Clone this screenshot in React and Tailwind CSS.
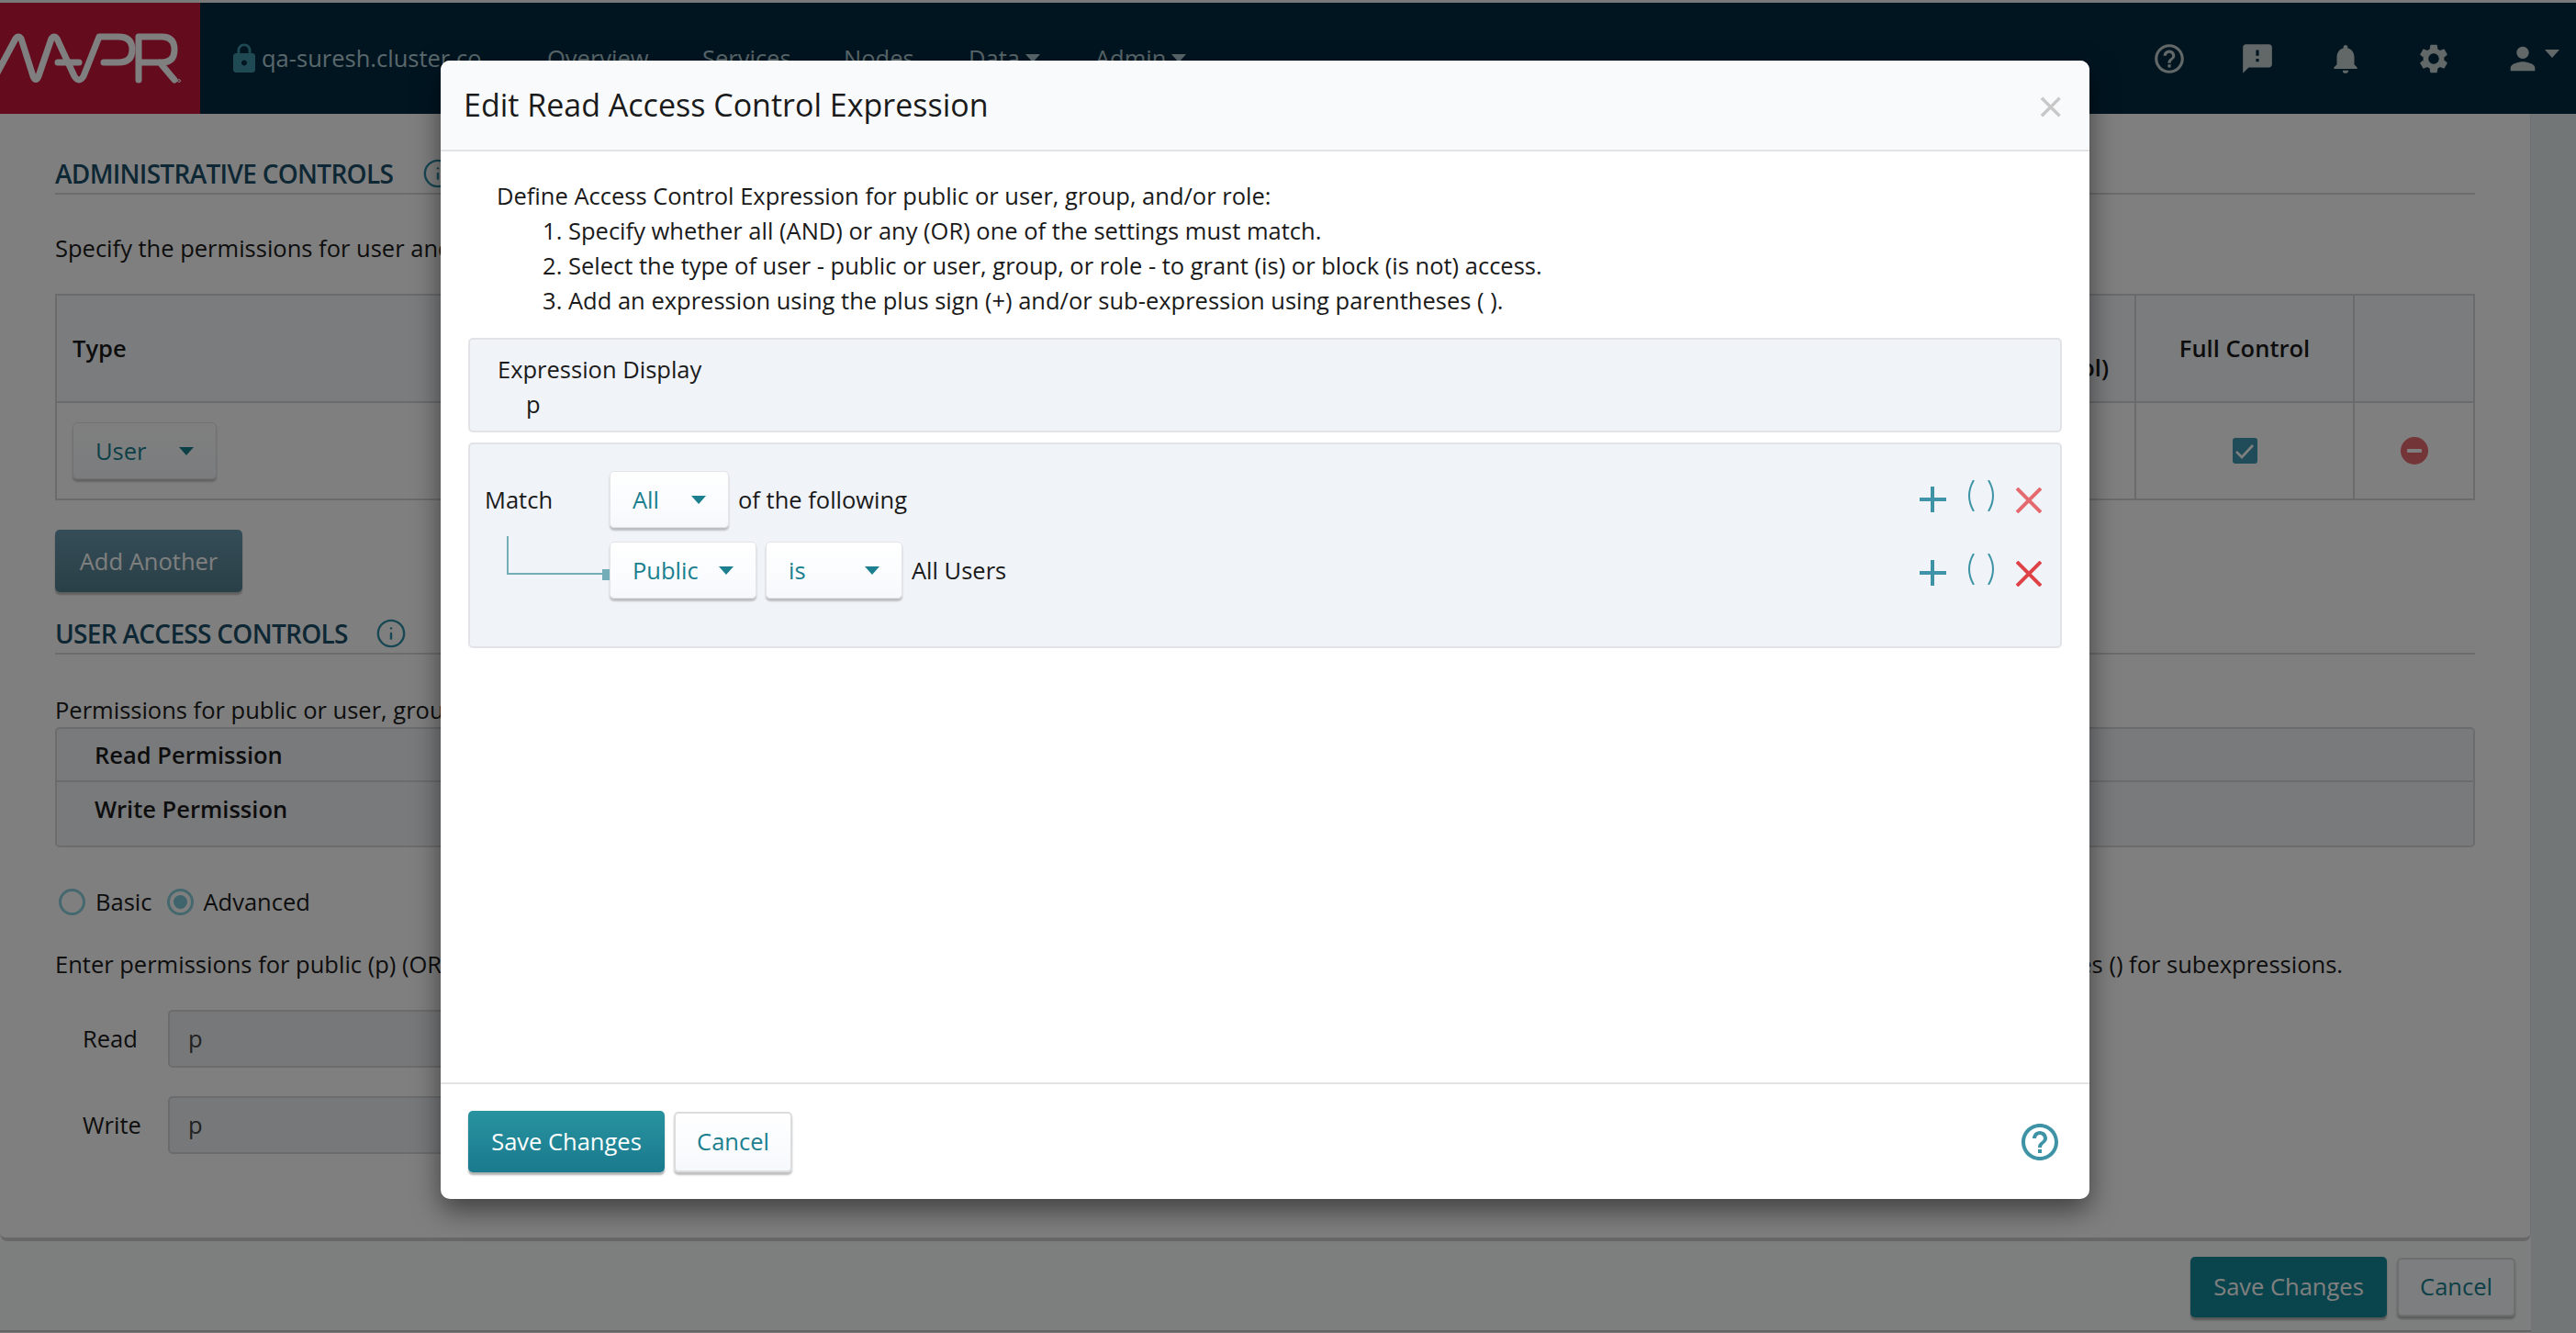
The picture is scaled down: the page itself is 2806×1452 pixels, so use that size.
import { Info } from 'lucide-react';
import { MdHelpOutline, MdFeedback, MdNotifications, MdSettings, MdPerson, MdLock } from 'react-icons/md';

const Caret = ({ className = '' }) => (
  <svg viewBox="0 0 16 9" className={`w-[16px] h-[9px] shrink-0 ${className}`}>
    <polygon points="0,0 16,0 8,9" fill="currentColor" />
  </svg>
);

const Logo = () => (
  <svg viewBox="0 0 218 121" className="w-[218px] h-[121px] block" fill="none" stroke="#ffffff" strokeWidth="7" strokeLinejoin="round" strokeLinecap="round">
    <path d="M-6 82 L17 39 Q20 35 23 39 L36 80 Q39 87 42 80 L56 39 Q59 35 62 39 L81 80 Q86 88 91 80 L108 37 H129 Q144 37 144 51 Q144 65 129 65 H113" />
    <path d="M63 65 H86" />
    <path d="M151 84 V37 H176 Q190 37 190 51 Q190 65 176 65 H151 M174 65 L190 84" />
    <circle cx="195" cy="85" r="1.5" strokeWidth="1" />
  </svg>
);

const Select = ({ label, width }) => (
  <div className={`${width} h-[62px] flex items-center justify-between pl-[24px] pr-[24px] bg-linear-to-b from-white to-[#f6f9fc] border border-[#e2e4e8] rounded-[5px] shadow-[0_3px_2px_rgba(0,0,0,0.22)] text-[#1b7f8f] shrink-0`}>
    <span>{label}</span>
    <Caret />
  </div>
);

const RowActions = ({ xColor, offset }) => (
  <div className={`ml-auto flex items-start gap-[21px] pr-[20px] ${offset}`}>
    <svg viewBox="0 0 29 28" className="w-[29px] h-[28px] mt-[7px]" fill="#3f93a6">
      <rect x="0" y="12" width="29" height="4" />
      <rect x="12" y="0" width="4" height="28" />
    </svg>
    <svg viewBox="0 0 34 34" className="w-[34px] h-[34px]" fill="none" stroke="#3f93a6" strokeWidth="2">
      <path d="M9 0 Q-1 17 9 34" />
      <path d="M25 0 Q35 17 25 34" />
    </svg>
    <svg viewBox="0 0 28 28" className="w-[28px] h-[28px] mt-[8px]" fill="none" stroke={xColor} strokeWidth="4">
      <path d="M1 1 L27 27 M27 1 L1 27" />
    </svg>
  </div>
);

const SectionTitle = ({ title, margin, iconMargin }) => (
  <div className={`${margin} h-[48px] pt-[4px] border-b-2 border-[#d8d8d8] flex items-center text-[28px] font-semibold tracking-[-0.7px] text-[#1c4f68]`}>
    <span>{title}</span>
    <Info className={`${iconMargin} text-[#2f8ea6]`} size={34} strokeWidth={1.7} />
  </div>
);

const App = () => {
  return (
    <div className="relative w-[2806px] h-[1452px] overflow-hidden bg-white font-['Open_Sans','Noto_Sans',sans-serif] text-[25.5px] text-[#1a1a1a]">
      {/* Page under the dialog */}
      <div className="h-[3px] bg-[#f0f0f0]" />
      <div className="h-[121px] flex items-center bg-[#022a42] text-[#b4d0d8]">
        <div className="w-[218px] h-full bg-[#c8183c] shrink-0 overflow-hidden"><Logo /></div>
        <MdLock className="ml-[30px] text-[#3e94a8]" size={36} />
        <span className="ml-[1px] w-[311px]">qa-suresh.cluster.co</span>
        <span className="w-[169px]">Overview</span>
        <span className="w-[154px]">Services</span>
        <span className="w-[136px]">Nodes</span>
        <span className="w-[138px] flex items-center gap-[6px]">Data<Caret /></span>
        <span className="flex items-center gap-[6px]">Admin<Caret /></span>
        <div className="ml-auto flex items-center gap-[58px] pr-[18px] text-[#c4d0d0]">
          <MdHelpOutline size={38} />
          <MdFeedback size={38} />
          <MdNotifications size={38} />
          <MdSettings size={38} />
          <span className="flex items-center gap-[4px]"><MdPerson size={40} /><Caret className="-mt-[10px]" /></span>
        </div>
      </div>

      <div className="flex h-[1328px]">
        <div className="w-[2757px] shrink-0 flex flex-col">
          <div className="h-[1228px] shrink-0 px-[60px] border-b-4 border-[#d0d0d0] border-r border-r-[#dde3e3] rounded-br-[8px] rounded-bl-[8px]">
            <SectionTitle title="ADMINISTRATIVE CONTROLS" margin="mt-[40px]" iconMargin="ml-[32px]" />
            <p className="mt-[40px] h-[36px] leading-[36px]">Specify the permissions for user and group</p>

            <div className="mt-[32px] h-[225px] border-2 border-[#d6d6d6] flex flex-col">
              <div className="h-[117px] flex bg-[#f6f8fc] border-b-2 border-[#d6d6d6] font-semibold">
                <div className="flex-1 flex justify-between items-center pl-[17px] pr-[28px]">
                  <span>Type</span>
                  <span className="self-end pb-[18px]">(Full Control)</span>
                </div>
                <div className="w-[238px] border-l-2 border-[#d6d6d6] flex items-center justify-center">Full Control</div>
                <div className="w-[131px] border-l-2 border-[#d6d6d6]" />
              </div>
              <div className="flex-1 flex">
                <div className="flex-1 flex items-center pl-[17px]">
                  <Select label="User" width="w-[157px]" />
                </div>
                <div className="w-[238px] border-l-2 border-[#d6d6d6] flex items-center justify-center">
                  <svg viewBox="0 0 27 28" className="w-[27px] h-[28px]">
                    <rect width="27" height="28" rx="3" fill="#3f98b0" />
                    <path d="M4 15 L10 21 L22 8" fill="none" stroke="#ffffff" strokeWidth="2.6" />
                  </svg>
                </div>
                <div className="w-[131px] border-l-2 border-[#d6d6d6] flex items-center justify-center">
                  <svg viewBox="0 0 30 30" className="w-[30px] h-[30px]">
                    <circle cx="15" cy="15" r="15" fill="#e66a70" />
                    <rect x="7" y="13" width="16" height="4" rx="1" fill="#ffffff" />
                  </svg>
                </div>
              </div>
            </div>

            <button className="mt-[32px] w-[204px] h-[68px] rounded-[5px] bg-linear-to-b from-[#6a9ab0] to-[#54808f] text-white shadow-[0_3px_2px_rgba(0,0,0,0.25)] block">Add Another</button>

            <SectionTitle title="USER ACCESS CONTROLS" margin="mt-[20px]" iconMargin="ml-[30px]" />
            <p className="mt-[42px] h-[36px] leading-[36px]">Permissions for public or user, group, or role</p>

            <div className="mt-[1px] h-[131px] bg-[#f3f5f9] border-2 border-[#d8d8d8] rounded-[5px]">
              <div className="h-[58px] px-[41px] flex items-center border-b-2 border-[#d8d8d8] font-semibold">Read Permission</div>
              <div className="h-[58px] px-[41px] flex items-center font-semibold">Write Permission</div>
            </div>

            <div className="mt-[41px] h-[36px] flex items-center pl-[4px]">
              <span className="w-[29px] h-[29px] rounded-full border-[3px] border-[#8ad0dc] shrink-0" />
              <span className="ml-[11px]">Basic</span>
              <span className="ml-[17px] w-[29px] h-[29px] rounded-full border-[3px] border-[#8ad0dc] shrink-0 flex items-center justify-center">
                <span className="w-[15px] h-[15px] rounded-full bg-[#80c8d8]" />
              </span>
              <span className="ml-[10px]">Advanced</span>
            </div>

            <p className="mt-[32px] h-[36px] leading-[36px] flex justify-between pr-[144px]">
              <span>Enter permissions for public (p) (OR</span>
              <span>parentheses () for subexpressions.</span>
            </p>

            <div className="mt-[32px] h-[63px] flex items-center">
              <span className="w-[123px] pl-[30px]">Read</span>
              <div className="w-[900px] h-full bg-[#eef0f4] border-2 border-[#d8d8d8] rounded-[5px] flex items-center pl-[20px] text-[#444]">p</div>
            </div>
            <div className="mt-[31px] h-[63px] flex items-center">
              <span className="w-[123px] pl-[30px]">Write</span>
              <div className="w-[900px] h-full bg-[#eef0f4] border-2 border-[#d8d8d8] rounded-[5px] flex items-center pl-[20px] text-[#444]">p</div>
            </div>
          </div>

          <div className="h-[97px] shrink-0 bg-[#fafefe] flex items-center justify-end gap-[11px] pr-[17px] pt-[2px]">
            <button className="w-[214px] h-[66px] rounded-[5px] bg-[#148899] text-white shadow-[0_3px_2px_rgba(0,0,0,0.3)]">Save Changes</button>
            <button className="w-[129px] h-[64px] rounded-[5px] bg-[#fafcfe] border-2 border-[#dcdcdc] text-[#1b7f8f] shadow-[0_3px_2px_rgba(0,0,0,0.25)]">Cancel</button>
          </div>
          <div className="flex-1 border-t-2 border-[#c8c8c8] flex overflow-hidden text-[26px] leading-[22px]">
            <span className="ml-[453px] w-[911px] font-medium">Server Start 2019-03-13 . 12:58:18 PM</span>
            <span>Mar 13, 2019 . 12:58 PM</span>
            <span className="ml-[200px]">1.14 MB . 5 MB</span>
          </div>
        </div>
        <div className="flex-1 bg-[#e4ecec]" />
      </div>

      {/* Dim layer and dialog */}
      <div className="absolute inset-0 bg-black/50 pl-[480px] pt-[66px]">
        <div className="w-[1796px] h-[1240px] bg-white rounded-[10px] shadow-[0_12px_30px_rgba(0,0,0,0.5)] flex flex-col">
          <div className="h-[99px] shrink-0 bg-[#f9fafc] border-b-2 border-[#e4e4e4] rounded-t-[10px] flex items-center justify-between pl-[25px] pr-[28px]">
            <h2 className="text-[34px]">Edit Read Access Control Expression</h2>
            <span className="text-[50px] leading-none text-[#c8c8c8]">×</span>
          </div>

          <div className="flex-1 pt-[29px] px-[30px]">
            <div className="pl-[31px] leading-[38px]">
              <p>Define Access Control Expression for public or user, group, and/or role:</p>
              <ol className="pl-[78px] list-decimal">
                <li>Specify whether all (AND) or any (OR) one of the settings must match.</li>
                <li>Select the type of user - public or user, group, or role - to grant (is) or block (is not) access.</li>
                <li>Add an expression using the plus sign (+) and/or sub-expression using parentheses ( ).</li>
              </ol>
            </div>

            <div className="mt-[22px] h-[103px] bg-[#f0f3f8] border-2 border-[#e2e3e6] rounded-[5px] pl-[30px] pt-[13px] leading-[38px]">
              <div>Expression Display</div>
              <div className="pl-[31px]">p</div>
            </div>

            <div className="mt-[11px] h-[224px] bg-[#f0f3f8] border-2 border-[#e2e3e6] rounded-[5px] pt-[29px] relative">
              <div className="h-[62px] flex items-center">
                <span className="w-[152px] pl-[16px]">Match</span>
                <Select label="All" width="w-[130px]" />
                <span className="ml-[10px]">of the following</span>
                <RowActions xColor="#e46a70" offset="-mt-[6px]" />
              </div>
              <div className="mt-[15px] h-[62px] flex items-center">
                <div className="w-[152px] shrink-0" />
                <Select label="Public" width="w-[160px]" />
                <div className="w-[10px] shrink-0" />
                <Select label="is" width="w-[149px]" />
                <span className="ml-[10px]">All Users</span>
                <RowActions xColor="#de4246" offset="mt-0" />
              </div>
              {/* connector from Match down to the first condition */}
              <div className="absolute left-[40px] top-[100px] w-[104px] h-[42px] border-l-2 border-b-2 border-[#72adb8]" />
              <div className="absolute left-[144px] top-[136px] w-[8px] h-[12px] bg-[#72adb8]" />
            </div>
          </div>

          <div className="h-[127px] shrink-0 border-t-2 border-[#e4e4e4] flex items-center pl-[30px] pr-[30px] gap-[10px]">
            <button className="w-[214px] h-[67px] rounded-[5px] bg-linear-to-b from-[#28939f] to-[#1a7a8e] text-white shadow-[0_3px_2px_rgba(0,0,0,0.3)]">Save Changes</button>
            <button className="w-[129px] h-[66px] rounded-[5px] bg-linear-to-b from-white to-[#f6f9fc] border-2 border-[#dcdcdc] text-[#1b7f8f] shadow-[0_3px_2px_rgba(0,0,0,0.25)]">Cancel</button>
            <MdHelpOutline className="ml-auto text-[#3f93a6]" size={48} />
          </div>
        </div>
      </div>
    </div>
  );
};

export default App;
